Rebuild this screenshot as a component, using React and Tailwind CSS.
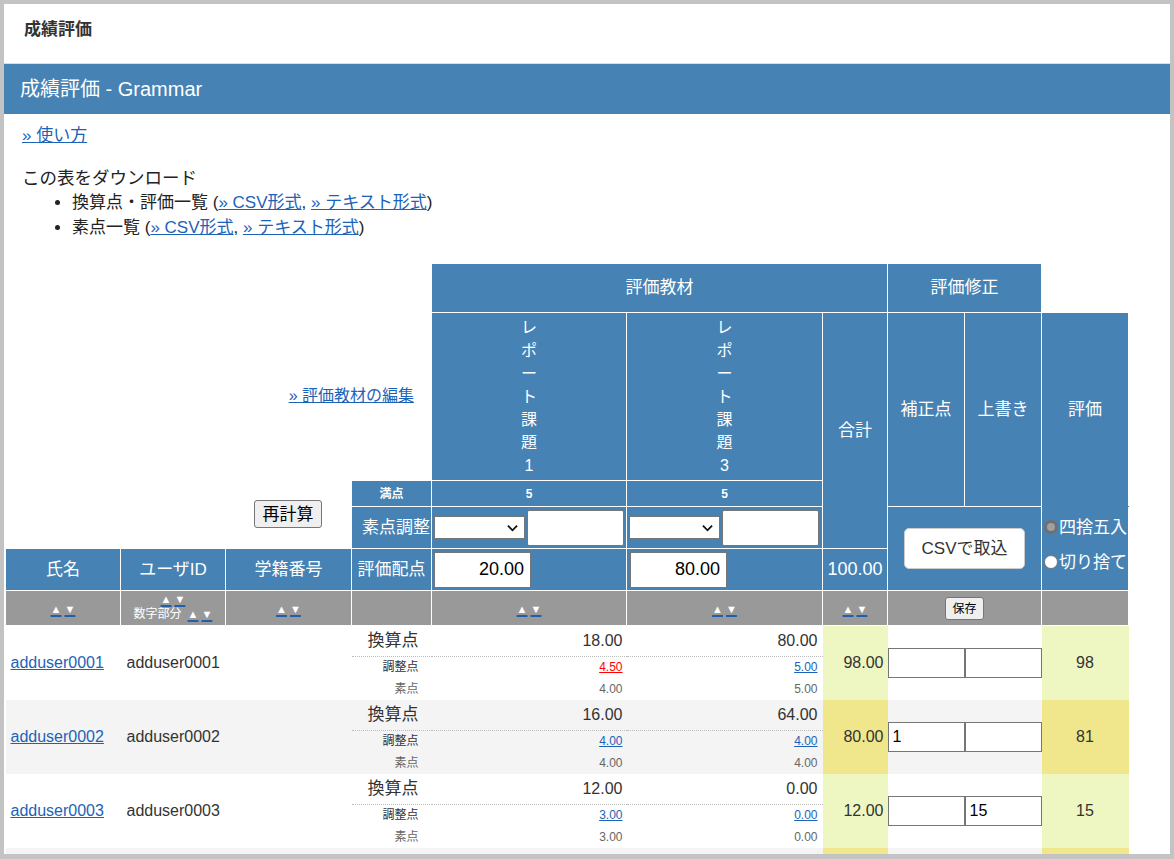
import { useState } from "react";

const th = "border border-white bg-[#4682b4] text-white font-normal text-[17px] p-0 align-middle";
const sortCell = "border border-white bg-[#999999] text-white font-normal p-0 align-middle text-center";

const rows = [
  { id: "adduser0001", conv: ["18.00", "80.00"], adj: [["4.50", true], ["5.00", false]], raw: ["4.00", "5.00"], total: "98.00", hosei: "", uwa: "", grade: "98", hi: false },
  { id: "adduser0002", conv: ["16.00", "64.00"], adj: [["4.00", false], ["4.00", false]], raw: ["4.00", "4.00"], total: "80.00", hosei: "1", uwa: "", grade: "81", hi: true },
  { id: "adduser0003", conv: ["12.00", "0.00"], adj: [["3.00", false], ["0.00", false]], raw: ["3.00", "0.00"], total: "12.00", hosei: "", uwa: "15", grade: "15", hi: false },
];

const Sort = () => (
  <span className="inline-flex gap-[3px] text-[11px] leading-[13px]">
    <a href="#" className="text-white underline decoration-[#1f5fae] decoration-2 underline-offset-2">▲</a>
    <a href="#" className="text-white underline decoration-[#1f5fae] decoration-2 underline-offset-2">▼</a>
  </span>
);

const Vert = ({ text }) => (
  <div className="flex flex-col items-center">
    {text.split("").map((c, i) => (
      <div key={i} className="leading-[23px] text-[16px]">{c}</div>
    ))}
  </div>
);

const Chevron = () => (
  <svg viewBox="0 0 12 8" className="w-[11px] h-[8px]" fill="none" stroke="#111" strokeWidth="2">
    <path d="M1 1.5l5 5 5-5" />
  </svg>
);

const AdjustCell = () => (
  <th className={th}>
    <div className="flex items-center pl-[2px] gap-[2px]">
      <div className="relative w-[91px] h-[23px] bg-white border border-[#767676]">
        <span className="absolute right-[6px] top-[7px]"><Chevron /></span>
      </div>
      <input className="w-[97px] h-[36px] bg-white border border-[#767676] rounded-[2px]" />
    </div>
  </th>
);

const Radio = ({ checked }) =>
  checked ? (
    <span className="inline-block w-[14px] h-[14px] rounded-full border-[3px] border-[#6f6f6f] bg-[#a0a0a0] shrink-0" />
  ) : (
    <span className="inline-block w-[14px] h-[14px] rounded-full border border-[#767676] bg-white shrink-0" />
  );

function DataRow({ r, i }) {
  const rowBg = i % 2 === 1 ? "bg-[#f4f4f4]" : "bg-white";
  const hl = r.hi ? "bg-[#f0e68c]" : "bg-[#eef6c2]";
  const dot = "border-t border-dotted border-[#bdbdbd]";
  return (
    <>
      <tr className={`h-[31px] ${rowBg}`}>
        <td rowSpan={3} className="pl-[5px] align-middle">
          <a href="#" className="text-[16px] text-[#1c63b7] underline">{r.id}</a>
        </td>
        <td rowSpan={3} className="pl-[6px] align-middle text-[16px] text-[#333]">{r.id}</td>
        <td rowSpan={3}></td>
        <td className="text-right pr-[13px] text-[17px] text-[#333] align-middle">換算点</td>
        <td className="text-right pr-[4px] text-[16px] text-[#333] align-middle">{r.conv[0]}</td>
        <td className="text-right pr-[5px] text-[16px] text-[#333] align-middle">{r.conv[1]}</td>
        <td rowSpan={3} className={`${hl} text-right pr-[4px] text-[16px] text-[#333] align-middle`}>{r.total}</td>
        <td rowSpan={3} className="p-0 align-middle">
          <input defaultValue={r.hosei} className="block w-[77px] h-[30px] bg-white border border-[#767676] pl-[4px] text-[16px] text-black" />
        </td>
        <td rowSpan={3} className="p-0 align-middle">
          <input defaultValue={r.uwa} className="block w-[77px] h-[30px] bg-white border border-[#767676] pl-[4px] text-[16px] text-black" />
        </td>
        <td rowSpan={3} className={`${hl} text-center text-[16px] text-[#333] align-middle`}>{r.grade}</td>
      </tr>
      <tr className={`h-[21px] ${rowBg}`}>
        <td className={`${dot} text-right pr-[13px] text-[12px] text-[#333]`}>調整点</td>
        {r.adj.map(([v, red], k) => (
          <td key={k} className={`${dot} text-right ${k === 0 ? "pr-[4px]" : "pr-[5px]"} text-[12px]`}>
            <a href="#" className={red ? "text-[#ff0000] underline" : "text-[#1c63b7] underline"}>{v}</a>
          </td>
        ))}
      </tr>
      <tr className={`h-[22px] ${rowBg}`}>
        <td className="text-right pr-[13px] text-[12px] text-[#666]">素点</td>
        <td className="text-right pr-[4px] text-[12px] text-[#666]">{r.raw[0]}</td>
        <td className="text-right pr-[5px] text-[12px] text-[#666]">{r.raw[1]}</td>
      </tr>
    </>
  );
}

export default function App() {
  const [round] = useState("half");
  return (
    <div className="w-[1174px] h-[859px] bg-[#c3c3c3] pt-[4px] pl-[4px] pr-[4px] pb-[5px]">
      <div className="h-full bg-white overflow-hidden font-['Liberation_Sans','Noto_Sans_CJK_JP',sans-serif] text-[#222]">
        <div className="h-[60px] flex items-center pl-[20px] pb-[8px] border-b border-[#dddddd]">
          <h1 className="text-[17px] font-bold text-[#333]">成績評価</h1>
        </div>
        <div className="h-[50px] bg-[#4682b4] flex items-center pl-[16px]">
          <h2 className="text-[20px] text-white">成績評価 - Grammar</h2>
        </div>

        <div className="pl-[18px]">
          <div className="mt-[10px] leading-[24px] text-[17px]">
            <a href="#" className="text-[#1c63b7] underline">» 使い方</a>
          </div>
          <div className="mt-[18px] leading-[24px] text-[17.5px]">この表をダウンロード</div>
          <ul className="list-disc pl-[50px] text-[17px] leading-[25px]">
            <li>
              換算点・評価一覧 (<a href="#" className="text-[#1c63b7] underline">» CSV形式</a>,{" "}
              <a href="#" className="text-[#1c63b7] underline">» テキスト形式</a>)
            </li>
            <li>
              素点一覧 (<a href="#" className="text-[#1c63b7] underline">» CSV形式</a>,{" "}
              <a href="#" className="text-[#1c63b7] underline">» テキスト形式</a>)
            </li>
          </ul>
        </div>

        <table className="mt-[23px] ml-[1px] table-fixed border-collapse w-[1123px]">
          <colgroup>
            <col className="w-[115px]" />
            <col className="w-[105px]" />
            <col className="w-[126px]" />
            <col className="w-[80px]" />
            <col className="w-[195px]" />
            <col className="w-[196px]" />
            <col className="w-[65px]" />
            <col className="w-[77px]" />
            <col className="w-[77px]" />
            <col className="w-[87px]" />
          </colgroup>
          <thead>
            <tr className="h-[49px]">
              <td colSpan={4}></td>
              <th colSpan={3} className={th}>評価教材</th>
              <th colSpan={2} className={th}>評価修正</th>
              <td></td>
            </tr>
            <tr className="h-[168px]">
              <td colSpan={4} className="text-right pr-[17px] align-middle text-[16px]">
                <a href="#" className="text-[#1c63b7] underline">» 評価教材の編集</a>
              </td>
              <th className={th}><Vert text="レポート課題1" /></th>
              <th className={th}><Vert text="レポート課題3" /></th>
              <th rowSpan={3} className={th}>合計</th>
              <th rowSpan={2} className={th}>補正点</th>
              <th rowSpan={2} className={th}>上書き</th>
              <th rowSpan={2} className={`${th} border-b-[#4682b4]`}>評価</th>
            </tr>
            <tr className="h-[26px]">
              <td colSpan={3} rowSpan={2} className="text-right pr-[29px] align-middle">
                <button className="h-[28px] w-[68px] bg-[#efefef] border border-[#767676] rounded-[3px] text-[17px] text-black leading-none">再計算</button>
              </td>
              <th className={`${th} !text-[12px] !font-bold`}>満点</th>
              <th className={`${th} !text-[12px] !font-bold`}>5</th>
              <th className={`${th} !text-[12px] !font-bold`}>5</th>
            </tr>
            <tr className="h-[42px]">
              <th className={`${th} text-right pr-[1px] whitespace-nowrap`}>素点調整</th>
              <AdjustCell />
              <AdjustCell />
              <th colSpan={2} rowSpan={2} className={th}>
                <button className="w-[121px] h-[41px] bg-white border border-[#cccccc] rounded-[5px] text-[17px] text-[#333]">CSVで取込</button>
              </th>
              <th rowSpan={2} className={`${th} border-t-[#4682b4] text-left`}>
                <div className="flex flex-col gap-[12px] pl-[2px] pb-[8px] whitespace-nowrap overflow-hidden">
                  <label className="flex items-center gap-[1px] leading-[23px]">
                    <Radio checked={round === "half"} />四捨五入
                  </label>
                  <label className="flex items-center gap-[1px] leading-[23px]">
                    <Radio checked={round === "down"} />切り捨て
                  </label>
                </div>
              </th>
            </tr>
            <tr className="h-[42px]">
              <th className={th}>氏名</th>
              <th className={th}>ユーザID</th>
              <th className={th}>学籍番号</th>
              <th className={th}>評価配点</th>
              <th className={`${th} text-left pl-[2px]`}>
                <input defaultValue="20.00" className="w-[97px] h-[36px] bg-white border border-[#767676] text-right pr-[6px] text-[18px] text-black" />
              </th>
              <th className={`${th} text-left pl-[3px]`}>
                <input defaultValue="80.00" className="w-[97px] h-[36px] bg-white border border-[#767676] text-right pr-[6px] text-[18px] text-black" />
              </th>
              <th className={`${th} !text-[18px]`}>100.00</th>
            </tr>
            <tr className="h-[35px]">
              <th className={sortCell}><Sort /></th>
              <th className={sortCell}>
                <div className="flex flex-col items-center leading-[17px]">
                  <Sort />
                  <div className="flex items-center gap-[6px] text-[12px]">
                    <span>数字部分</span>
                    <Sort />
                  </div>
                </div>
              </th>
              <th className={sortCell}><Sort /></th>
              <th className={sortCell}></th>
              <th className={sortCell}><Sort /></th>
              <th className={sortCell}><Sort /></th>
              <th className={sortCell}><Sort /></th>
              <th colSpan={2} className={sortCell}>
                <button className="h-[23px] px-[6px] bg-[#efefef] border border-[#767676] rounded-[3px] text-[12px] text-black leading-none">保存</button>
              </th>
              <th className={sortCell}></th>
            </tr>
          </thead>
          <tbody>
            {rows.map((r, i) => (
              <DataRow key={r.id} r={r} i={i} />
            ))}
            <tr className="h-[74px] bg-[#f4f4f4]">
              <td colSpan={6}></td>
              <td className="bg-[#f0e68c]"></td>
              <td colSpan={2}></td>
              <td className="bg-[#f0e68c]"></td>
            </tr>
          </tbody>
        </table>
      </div>
    </div>
  );
}
